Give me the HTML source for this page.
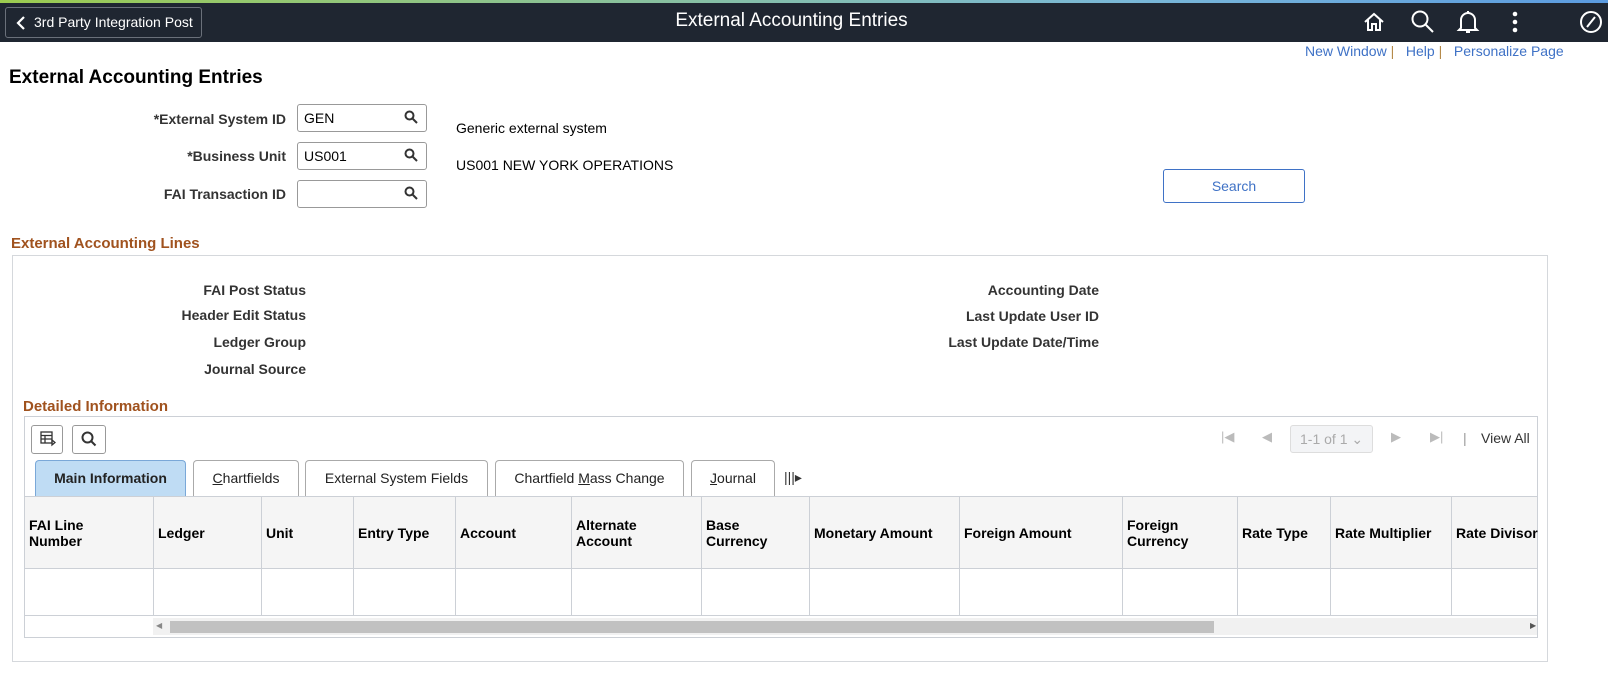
<!DOCTYPE html>
<html><head><meta charset="utf-8"><style>
body{margin:0;width:1608px;height:684px;position:relative;overflow:hidden;background:#fff;font-family:"Liberation Sans",Arial,sans-serif;font-size:14px;color:#000}
.a{position:absolute}
.lbl{position:absolute;font-weight:bold;color:#333;text-align:right;font-size:14px}
.inp{position:absolute;height:28px;border:1px solid #999;border-radius:3px;box-sizing:border-box;background:#fff;padding:5px 6px;font-size:14px}
.tab{position:absolute;top:460px;height:36px;box-sizing:border-box;border:1px solid #aaa;border-bottom:none;border-radius:4px 4px 0 0;background:#fff;text-align:center;line-height:34px;font-size:14px;color:#222}
.th{position:absolute;top:497px;height:71px;border-right:1px solid #ccd0d6;box-sizing:border-box;font-weight:bold;font-size:14px;display:flex;align-items:center;padding-left:5px;line-height:16px}
.vl{position:absolute;top:568px;height:47px;width:1px;background:#ccd0d6}
</style></head><body>
<div class="a" style="left:0;top:0;width:1608px;height:3px;background:linear-gradient(90deg,#9ccc50,#7ab8d8 70%,#5b9be0)"></div>
<div class="a" style="left:0;top:3px;width:1608px;height:39px;background:#1f2631"></div>
<div class="a" style="left:5px;top:7px;width:197px;height:31px;border:1px solid #6a707a;border-radius:3px;box-sizing:border-box;color:#fff;font-size:14px;line-height:29px;padding-left:28px">3rd Party Integration Post</div>
<svg class="a" style="left:15px;top:15px" width="12" height="16"><path d="M9 2L3 8l6 6" stroke="#fff" stroke-width="2.2" fill="none"/></svg>
<div class="a" style="left:0;width:1583px;top:10px;text-align:center;color:#fff;font-size:19px">External Accounting Entries</div>
<svg class="a" style="left:1362px;top:10px" width="24" height="24" fill="none" stroke="#fff" stroke-width="2"><path d="M3 12L12 4l9 8M6 10v10h4v-6h4v6h4V10"/></svg>
<svg class="a" style="left:1410px;top:9px" width="26" height="26" fill="none" stroke="#fff" stroke-width="2"><circle cx="10" cy="10" r="7.5"/><path d="M15.5 15.5L23 23"/></svg>
<svg class="a" style="left:1456px;top:9px" width="24" height="26" fill="none" stroke="#fff" stroke-width="2"><path d="M5 19V11a7 7 0 0114 0v8l2 2H3zM10 23h4M12 2v2"/></svg>
<svg class="a" style="left:1510px;top:11px" width="10" height="22" fill="#fff"><circle cx="5" cy="3" r="2.3"/><circle cx="5" cy="11" r="2.3"/><circle cx="5" cy="19" r="2.3"/></svg>
<svg class="a" style="left:1578px;top:9px" width="30" height="26" fill="none" stroke="#fff" stroke-width="2"><circle cx="13" cy="13" r="10"/><path d="M9 18l8-10"/></svg>
<div class="a" style="left:1305px;top:43px;color:#3f72c6;font-size:14px;white-space:nowrap">New Window <span style="color:#b58a4a">|</span> &nbsp; Help <span style="color:#b58a4a">|</span> &nbsp; Personalize Page</div>
<div class="a" style="left:9px;top:67px;font-size:19px;font-weight:bold">External Accounting Entries</div>
<div class="lbl" style="right:1322px;top:111px">*External System ID</div>
<div class="lbl" style="right:1322px;top:148px">*Business Unit</div>
<div class="lbl" style="right:1322px;top:186px">FAI Transaction ID</div>
<div class="inp" style="left:297px;top:104px;width:130px">GEN</div>
<div class="inp" style="left:297px;top:142px;width:130px">US001</div>
<div class="inp" style="left:297px;top:180px;width:130px"></div>
<svg class="a" style="left:404px;top:110px" width="14" height="14" fill="none" stroke="#333" stroke-width="2"><circle cx="5.5" cy="5.5" r="4"/><path d="M8.5 8.5L13 13"/></svg>
<svg class="a" style="left:404px;top:148px" width="14" height="14" fill="none" stroke="#333" stroke-width="2"><circle cx="5.5" cy="5.5" r="4"/><path d="M8.5 8.5L13 13"/></svg>
<svg class="a" style="left:404px;top:186px" width="14" height="14" fill="none" stroke="#333" stroke-width="2"><circle cx="5.5" cy="5.5" r="4"/><path d="M8.5 8.5L13 13"/></svg>
<div class="a" style="left:456px;top:120px">Generic external system</div>
<div class="a" style="left:456px;top:157px">US001 NEW YORK OPERATIONS</div>
<div class="a" style="left:1163px;top:169px;width:142px;height:34px;border:1px solid #3f72c6;border-radius:3px;box-sizing:border-box;text-align:center;line-height:32px;color:#3f72c6">Search</div>
<div class="a" style="left:11px;top:235px;font-weight:bold;color:#a0521e;font-size:15px">External Accounting Lines</div>
<div class="a" style="left:12px;top:255px;width:1536px;height:407px;border:1px solid #d5d8dc;box-sizing:border-box"></div>
<div class="lbl" style="right:1302px;top:282px">FAI Post Status</div>
<div class="lbl" style="right:1302px;top:307px">Header Edit Status</div>
<div class="lbl" style="right:1302px;top:334px">Ledger Group</div>
<div class="lbl" style="right:1302px;top:361px">Journal Source</div>
<div class="lbl" style="right:509px;top:282px">Accounting Date</div>
<div class="lbl" style="right:509px;top:308px">Last Update User ID</div>
<div class="lbl" style="right:509px;top:334px">Last Update Date/Time</div>
<div class="a" style="left:23px;top:398px;font-weight:bold;color:#a0521e;font-size:15px">Detailed Information</div>
<div class="a" style="left:24px;top:416px;width:1514px;height:222px;border:1px solid #ccd0d6;box-sizing:border-box"></div>
<div class="a" style="left:31px;top:425px;width:32px;height:29px;border:1px solid #999;border-radius:3px;box-sizing:border-box"></div>
<svg class="a" style="left:40px;top:431px" width="16" height="16" fill="none" stroke="#333" stroke-width="1.3"><rect x="1" y="1" width="11" height="11"/><path d="M1 4.5h11M1 8h11M5 4v8M12 9l3 2.5-3 2.5z"/></svg>
<div class="a" style="left:72px;top:425px;width:34px;height:29px;border:1px solid #999;border-radius:3px;box-sizing:border-box"></div>
<svg class="a" style="left:81px;top:431px" width="16" height="16" fill="none" stroke="#333" stroke-width="2"><circle cx="6.5" cy="6.5" r="5"/><path d="M10 10l4.5 4.5"/></svg>
<div class="a" style="left:1221px;top:429px;color:#bbb;font-size:13px">|◀</div>
<div class="a" style="left:1262px;top:429px;color:#bbb;font-size:13px">◀</div>
<div class="a" style="left:1290px;top:425px;width:83px;height:28px;border:1px solid #ddd;border-radius:3px;background:#f3f4f6;box-sizing:border-box;color:#aaa;line-height:26px;padding-left:9px;font-size:14px">1-1 of 1 ⌄</div>
<div class="a" style="left:1391px;top:429px;color:#bbb;font-size:13px">▶</div>
<div class="a" style="left:1430px;top:429px;color:#bbb;font-size:13px">▶|</div>
<div class="a" style="left:1463px;top:430px;color:#999">|</div>
<div class="a" style="left:1481px;top:430px;color:#333">View All</div>
<div class="tab" style="left:35px;width:151px;background:#bfdcf4;border-color:#7aa8d8;font-weight:bold">Main Information</div>
<div class="tab" style="left:193px;width:106px"><u>C</u>hartfields</div>
<div class="tab" style="left:305px;width:183px">External System Fields</div>
<div class="tab" style="left:495px;width:189px">Chartfield <u>M</u>ass Change</div>
<div class="tab" style="left:691px;width:84px"><u>J</u>ournal</div>
<div class="a" style="left:784px;top:469px;font-size:14px;color:#333">|||▸</div>
<div class="a" style="left:25px;top:496px;width:1512px;height:1px;background:#ccd0d6"></div>
<div class="a" style="left:25px;top:497px;width:1512px;height:71px;background:#f5f5f5"></div>
<div class="a" style="left:25px;top:568px;width:1512px;height:1px;background:#ccd0d6"></div>
<div class="th" style="left:24px;width:130px">FAI Line<br>Number</div>
<div class="th" style="left:153px;width:109px">Ledger</div>
<div class="th" style="left:261px;width:93px">Unit</div>
<div class="th" style="left:353px;width:103px">Entry Type</div>
<div class="th" style="left:455px;width:117px">Account</div>
<div class="th" style="left:571px;width:131px">Alternate<br>Account</div>
<div class="th" style="left:701px;width:109px">Base<br>Currency</div>
<div class="th" style="left:809px;width:151px">Monetary Amount</div>
<div class="th" style="left:959px;width:164px">Foreign Amount</div>
<div class="th" style="left:1122px;width:116px">Foreign<br>Currency</div>
<div class="th" style="left:1237px;width:94px">Rate Type</div>
<div class="th" style="left:1330px;width:122px">Rate Multiplier</div>
<div class="th" style="left:1451px;width:87px;border-right:none">Rate Divisor</div>
<div class="vl" style="left:153px"></div><div class="vl" style="left:261px"></div><div class="vl" style="left:353px"></div><div class="vl" style="left:455px"></div><div class="vl" style="left:571px"></div><div class="vl" style="left:701px"></div><div class="vl" style="left:809px"></div><div class="vl" style="left:959px"></div><div class="vl" style="left:1122px"></div><div class="vl" style="left:1237px"></div><div class="vl" style="left:1330px"></div><div class="vl" style="left:1451px"></div>
<div class="a" style="left:25px;top:615px;width:1512px;height:1px;background:#ccd0d6"></div>
<div class="a" style="left:153px;top:618px;width:1384px;height:17px;background:#f1f1f1"></div>
<div class="a" style="left:170px;top:621px;width:1044px;height:12px;background:#c1c1c1"></div>
<div class="a" style="left:156px;top:621px;font-size:8px;color:#888">◀</div>
<div class="a" style="left:1530px;top:621px;font-size:8px;color:#555">▶</div>
</body></html>
